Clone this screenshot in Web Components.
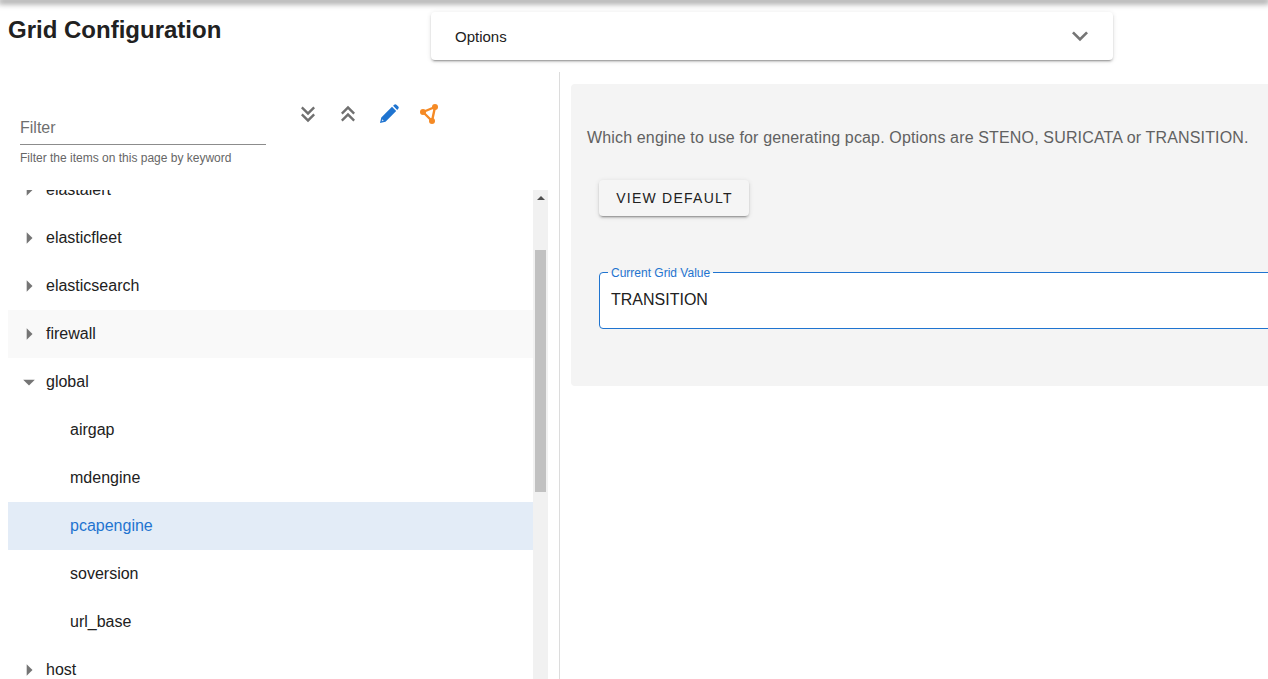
<!DOCTYPE html>
<html lang="en">
<head>
<meta charset="utf-8">
<title>Grid Configuration</title>
<style>
  html, body { margin: 0; height: 100%; overflow: hidden; background: #fff; }
  body { font-family: "Liberation Sans", Arial, sans-serif; color: rgba(0, 0, 0, .87); }
</style>
</head>
<body>
<grid-page>
  <page-header slot="header" heading="Grid Configuration"></page-header>
  <div slot="left">
    <tree-toolbar></tree-toolbar>
    <tree-view>
      <tree-node state="closed">elastalert</tree-node>
      <tree-node state="closed">elasticfleet</tree-node>
      <tree-node state="closed">elasticsearch</tree-node>
      <tree-node state="closed" hovered>firewall</tree-node>
      <tree-node state="open">global</tree-node>
      <tree-node child>airgap</tree-node>
      <tree-node child>mdengine</tree-node>
      <tree-node child active>pcapengine</tree-node>
      <tree-node child>soversion</tree-node>
      <tree-node child>url_base</tree-node>
      <tree-node state="closed">host</tree-node>
    </tree-view>
  </div>
  <setting-detail slot="right" label="Current Grid Value" value="TRANSITION">
    Which engine to use for generating pcap. Options are STENO, SURICATA or TRANSITION.
  </setting-detail>
</grid-page>

<script>
(function () {
    'use strict';

    const PATHS = {
        doubleDown: 'M16.59,5.59L18,7L12,13L6,7L7.41,5.59L12,10.17L16.59,5.59M16.59,11.59L18,13L12,19L6,13L7.41,11.59L12,16.17L16.59,11.59Z',
        doubleUp: 'M7.41,18.41L6,17L12,11L18,17L16.59,18.41L12,13.83L7.41,18.41M7.41,12.41L6,11L12,5L18,11L16.59,12.41L12,7.83L7.41,12.41Z',
        chevronDown: 'M7.41,8.58L12,13.17L16.59,8.58L18,10L12,16L6,10L7.41,8.58Z',
        menuRight: 'M10,17L15,12L10,7V17Z',
        menuDown: 'M7,10L12,15L17,10H7Z'
    };

    const svg = (name, size, color) =>
        `<svg width="${size}" height="${size}" viewBox="0 0 24 24" fill="${color}" aria-hidden="true"><path d="${PATHS[name]}"/></svg>`;

    const PENCIL = `<svg width="24" height="24" viewBox="0 0 24 24" aria-hidden="true">
        <path fill="#1f74d0" d="M3,21L4.3,15.5L15,4.8L19.2,9L8.5,19.7ZM16.1,3.7L17.2,2.7A1.6,1.6 0 0 1 19.4,2.7L21.3,4.6A1.6,1.6 0 0 1 21.3,6.8L20.2,7.9Z"/>
        <path fill="#cfe0f5" d="M4.7,19.3L5.2,17.2L6.8,18.8Z"/>
      </svg>`;

    const GRAPH = `<svg width="24" height="24" viewBox="0 0 24 24" aria-hidden="true">
        <path fill="none" stroke="#f58a25" stroke-width="2.4" stroke-linejoin="round" d="M6,10L18,5L15,19Z"/>
        <g fill="#f58a25"><circle cx="6" cy="10" r="3"/><circle cx="18" cy="5" r="3"/><circle cx="15" cy="19" r="3"/></g>
      </svg>`;

    customElements.define('grid-page', class extends HTMLElement {
        constructor() {
            super();
            this.attachShadow({ mode: 'open' }).innerHTML = `
          <style>
            :host {
              display: block;
              height: 679px;
              overflow: hidden;
              position: relative;
            }
            #shade {
              height: 0;
              box-shadow: 0 1px 6px 2px rgba(0, 0, 0, .55);
            }
            #main {
              display: grid;
              grid-template-columns: 552px 1fr;
              margin-left: 8px;
              height: 607px;
            }
            #left { border-right: 1px solid #dcdcdc; box-sizing: border-box; display: block; min-width: 0; }
            #right { padding: 12px 0 0 11px; min-width: 0; }
          </style>
          <div id="shade"></div>
          <slot name="header"></slot>
          <div id="main">
            <div id="left"><slot name="left"></slot></div>
            <div id="right"><slot name="right"></slot></div>
          </div>
        `;
        }
    });

    customElements.define('page-header', class extends HTMLElement {
        constructor() {
            super();
            this.attachShadow({ mode: 'open' }).innerHTML = `
          <style>
            :host {
              display: grid;
              grid-template-columns: 431px 682px;
              height: 72px;
              box-sizing: border-box;
              padding-top: 12px;
            }
            h1 {
              margin: 3px 0 0 8px;
              font: bold 24px/30px "Liberation Sans", Arial, sans-serif;
              color: #212121;
            }
            #panel {
              height: 48px;
              box-sizing: border-box;
              display: flex;
              align-items: center;
              justify-content: space-between;
              padding: 0 17px 0 24px;
              background: #fff;
              border-radius: 4px;
              font-size: 15px;
              color: #212121;
              box-shadow: 0 3px 1px -2px rgba(0,0,0,.2), 0 2px 2px 0 rgba(0,0,0,.14), 0 1px 5px 0 rgba(0,0,0,.12);
            }
            svg { display: block; }
          </style>
          <h1></h1>
          <div id="panel"><span>Options</span>${svg('chevronDown', 32, '#757575')}</div>
        `;
            this.shadowRoot.querySelector('h1').textContent = this.getAttribute('heading');
        }
    });

    customElements.define('tree-toolbar', class extends HTMLElement {
        constructor() {
            super();
            this.attachShadow({ mode: 'open' }).innerHTML = `
          <style>
            :host {
              display: flex;
              height: 118px;
              box-sizing: border-box;
              padding-top: 22px;
            }
            #filter { width: 246px; margin: 18px 0 0 12px; }
            #input {
              height: 33px;
              box-sizing: border-box;
              padding-top: 5px;
              border-bottom: 1px solid #8c8c8c;
              font-size: 16px;
              line-height: 22px;
              color: #6f6f6f;
            }
            #hint { margin-top: 6px; font-size: 12px; line-height: 14px; color: #666; }
            #icons { display: flex; margin-left: 22px; height: 40px; }
            #icons span { width: 40.3px; height: 40px; display: flex; align-items: center; justify-content: center; }
            svg { display: block; }
          </style>
          <div id="filter">
            <div id="input">Filter</div>
            <div id="hint">Filter the items on this page by keyword</div>
          </div>
          <div id="icons">
            <span>${svg('doubleDown', 28, '#707070')}</span>
            <span>${svg('doubleUp', 28, '#707070')}</span>
            <span>${PENCIL}</span>
            <span>${GRAPH}</span>
          </div>
        `;
        }
    });

    customElements.define('tree-view', class extends HTMLElement {
        constructor() {
            super();
            this.attachShadow({ mode: 'open' }).innerHTML = `
          <style>
            :host {
              display: flex;
              height: 489px;
              overflow: hidden;
            }
            #list { flex: 0 0 525px; overflow: hidden; }
            #items { margin-top: -24px; }
            #bar {
              flex: 0 0 15px;
              background: #f1f1f1;
              display: flex;
              flex-direction: column;
              align-items: center;
            }
            #up {
              height: 15px;
              width: 15px;
              display: flex;
              align-items: center;
              justify-content: center;
            }
            #up i {
              border: 4px solid transparent;
              border-top: 0;
              border-bottom: 4px solid #505050;
            }
            #thumb { width: 11px; height: 242px; margin-top: 45px; background: #c1c1c1; }
          </style>
          <div id="list"><div id="items"><slot></slot></div></div>
          <div id="bar"><div id="up"><i></i></div><div id="thumb"></div></div>
        `;
        }
    });

    customElements.define('tree-node', class extends HTMLElement {
        constructor() {
            super();
            const state = this.getAttribute('state');
            const icon = state ? svg(state === 'open' ? 'menuDown' : 'menuRight', 28, '#757575') : '';
            this.attachShadow({ mode: 'open' }).innerHTML = `
          <style>
            :host {
              display: flex;
              align-items: center;
              height: 48px;
              padding-left: 8px;
              font-size: 16px;
              color: #212121;
            }
            :host([child]) { padding-left: 62px; }
            :host([hovered]) { background: #f9f9f9; }
            :host([active]) { background: #e3ecf7; color: #1f74d0; }
            #toggle { width: 30px; height: 24px; flex: none; }
            svg { display: block; margin: -2px 0 0 -1.5px; }
          </style>
          ${state ? `<div id="toggle">${icon}</div>` : ''}
          <slot></slot>
        `;
        }
    });

    customElements.define('setting-detail', class extends HTMLElement {
        constructor() {
            super();
            this.attachShadow({ mode: 'open' }).innerHTML = `
          <style>
            :host {
              display: block;
              width: 760px;
              height: 302px;
              box-sizing: border-box;
              padding: 44px 16px 0;
              background: #f4f4f4;
              border-radius: 4px;
            }
            #desc { font-size: 16px; line-height: 20px; letter-spacing: .15px; color: #616161; white-space: nowrap; }
            #view {
              display: block;
              margin: 32px 0 0 12px;
              height: 36px;
              width: 150px;
              padding: 0 0 0 1px;
              border: 0;
              border-radius: 4px;
              background: #f5f5f5;
              font: 400 14px "Liberation Sans", Arial, sans-serif;
              letter-spacing: 1.25px;
              color: #212121;
              box-shadow: 0 3px 1px -2px rgba(0,0,0,.2), 0 2px 2px 0 rgba(0,0,0,.14), 0 1px 5px 0 rgba(0,0,0,.12);
            }
            fieldset {
              margin: 48px 0 0 12px;
              padding: 0 11px;
              height: 65px;
              box-sizing: border-box;
              border: 1px solid #1f74d0;
              border-radius: 4px;
              background: #fff;
              background-clip: padding-box;
            }
            legend {
              padding: 2px 3px 0;
              margin-left: -3px;
              font-size: 12px;
              line-height: 14px;
              color: #1f74d0;
            }
            #value { font-size: 16px; line-height: 24px; padding-top: 8px; color: #212121; }
          </style>
          <div id="desc"><slot></slot></div>
          <button id="view">VIEW DEFAULT</button>
          <fieldset>
            <legend>${this.getAttribute('label')}</legend>
            <div id="value">${this.getAttribute('value')}</div>
          </fieldset>
        `;
        }
    });
})();
</script>
</body>
</html>
